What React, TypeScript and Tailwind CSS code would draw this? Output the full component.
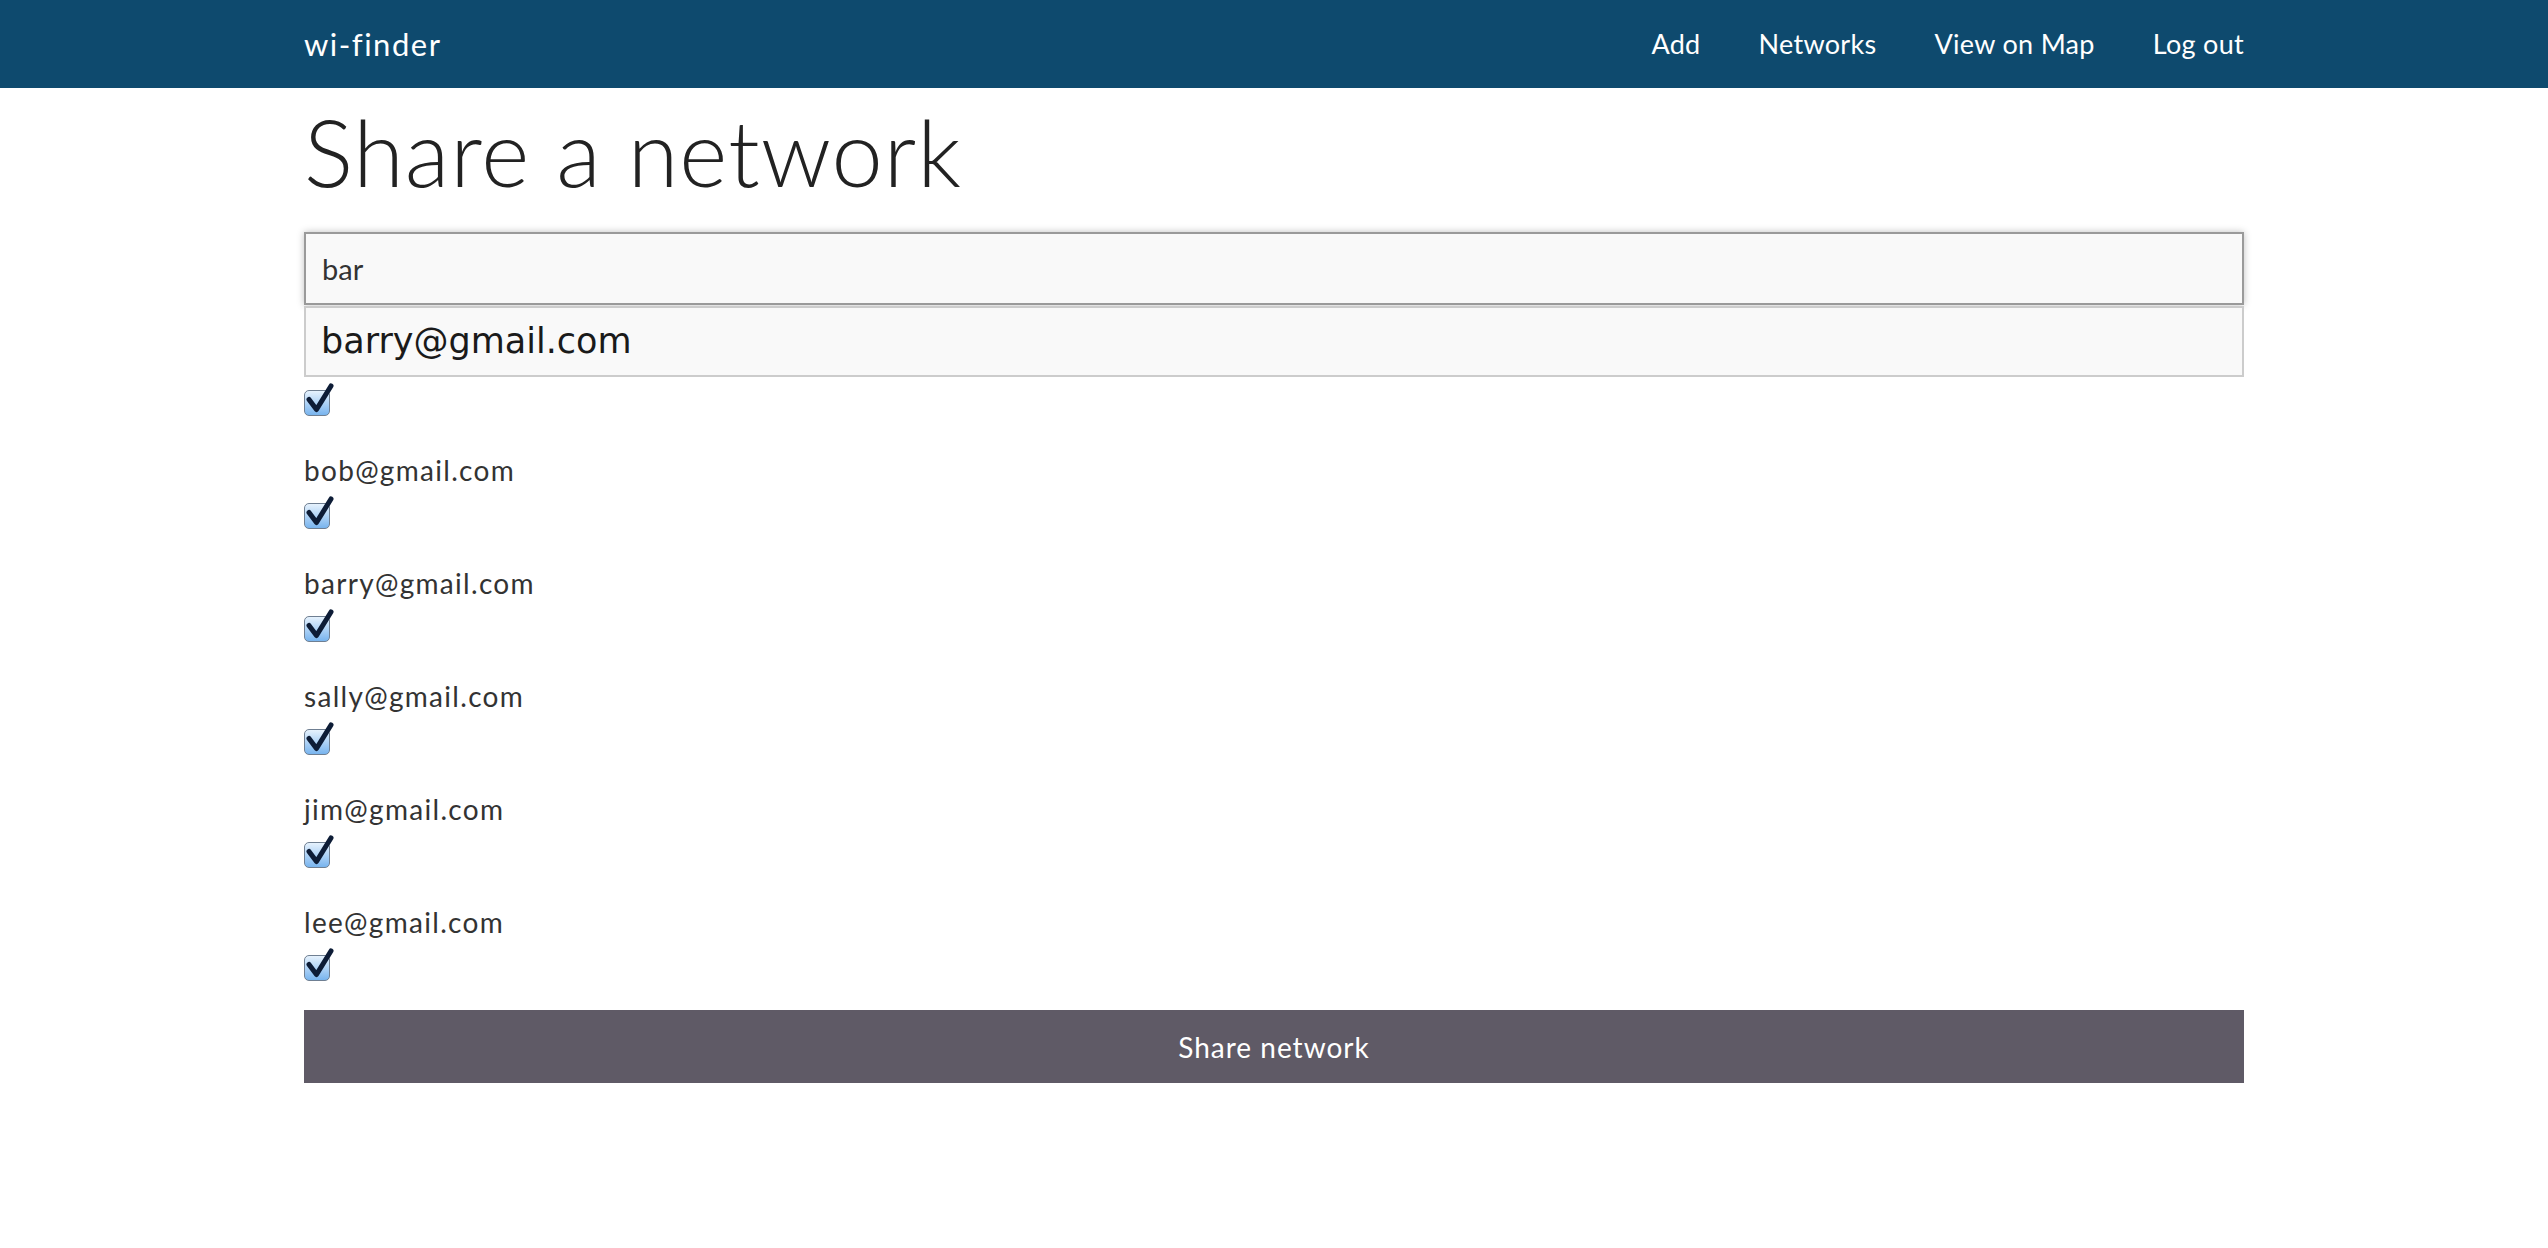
import { useState } from 'react';

const users = [
  'tom@gmail.com',
  'bob@gmail.com',
  'barry@gmail.com',
  'sally@gmail.com',
  'jim@gmail.com',
  'lee@gmail.com',
];

function Check() {
  return (
    <span className="relative block w-[26px] h-[26px] rounded-[5px] border border-[#6f7f92] bg-linear-to-b from-[#e6f2fd] to-[#78b4ee]">
      <svg className="absolute left-0 top-0 overflow-visible" width="24" height="24" viewBox="0 0 24 24" fill="none">
        <path d="M4 8.5 L11.5 18.5 L26 -5" stroke="#0d1c36" strokeWidth="5" strokeLinecap="round" strokeLinejoin="round" />
      </svg>
    </span>
  );
}

export default function App() {
  const [query, setQuery] = useState('bar');

  return (
    <div className="min-h-screen bg-white font-['Lato',sans-serif]">
      <nav className="bg-[#0e4a6e] h-[88px]">
        <div className="w-[1940px] mx-auto h-full flex items-center justify-between">
          <a href="#" className="text-white text-[31px] tracking-[1.5px]">wi-finder</a>
          <ul className="flex gap-[58px] text-white text-[27px] tracking-[0.3px]">
            <li><a href="#">Add</a></li>
            <li><a href="#">Networks</a></li>
            <li><a href="#">View on Map</a></li>
            <li><a href="#">Log out</a></li>
          </ul>
        </div>
      </nav>

      <main className="w-[1940px] mx-auto">
        <h1 className="mt-[13px] h-[101px] text-[92px] leading-[101px] font-light tracking-[1px] text-[#222]">Share a network</h1>

        <div className="relative mt-[30px]">
          <input
            value={query}
            onChange={e => setQuery(e.target.value)}
            className="block w-full h-[73px] border-2 border-[#9a9a9a] bg-[#f9f9f9] shadow-[0_0_7px_rgba(0,0,0,0.25)] px-[16px] text-[29px] text-[#333] outline-none"
          />
          <div className="absolute left-0 right-0 top-full mt-[1px] h-[71px] border-2 border-[#cccccc] bg-[#f9f9f9] z-10 flex items-center px-[15px] font-['DejaVu_Sans',sans-serif] text-[35px] text-[#1a1a1a]">
            barry@gmail.com
          </div>
        </div>

        <ul className="mt-[34px] flex flex-col gap-[36px]">
          {users.map((u, i) => (
            <li key={u}>
              <div className={i === 0 ? 'invisible h-[36px] leading-[36px] text-[28px]' : 'h-[36px] leading-[36px] text-[28px] tracking-[1.3px] text-[#333]'}>{u}</div>
              <div className="mt-[15px]"><Check /></div>
            </li>
          ))}
        </ul>

        <button className="mt-[29px] w-full h-[73px] bg-[#5f5a66] text-white text-[28px] tracking-[1px]">
          Share network
        </button>
      </main>
    </div>
  );
}
